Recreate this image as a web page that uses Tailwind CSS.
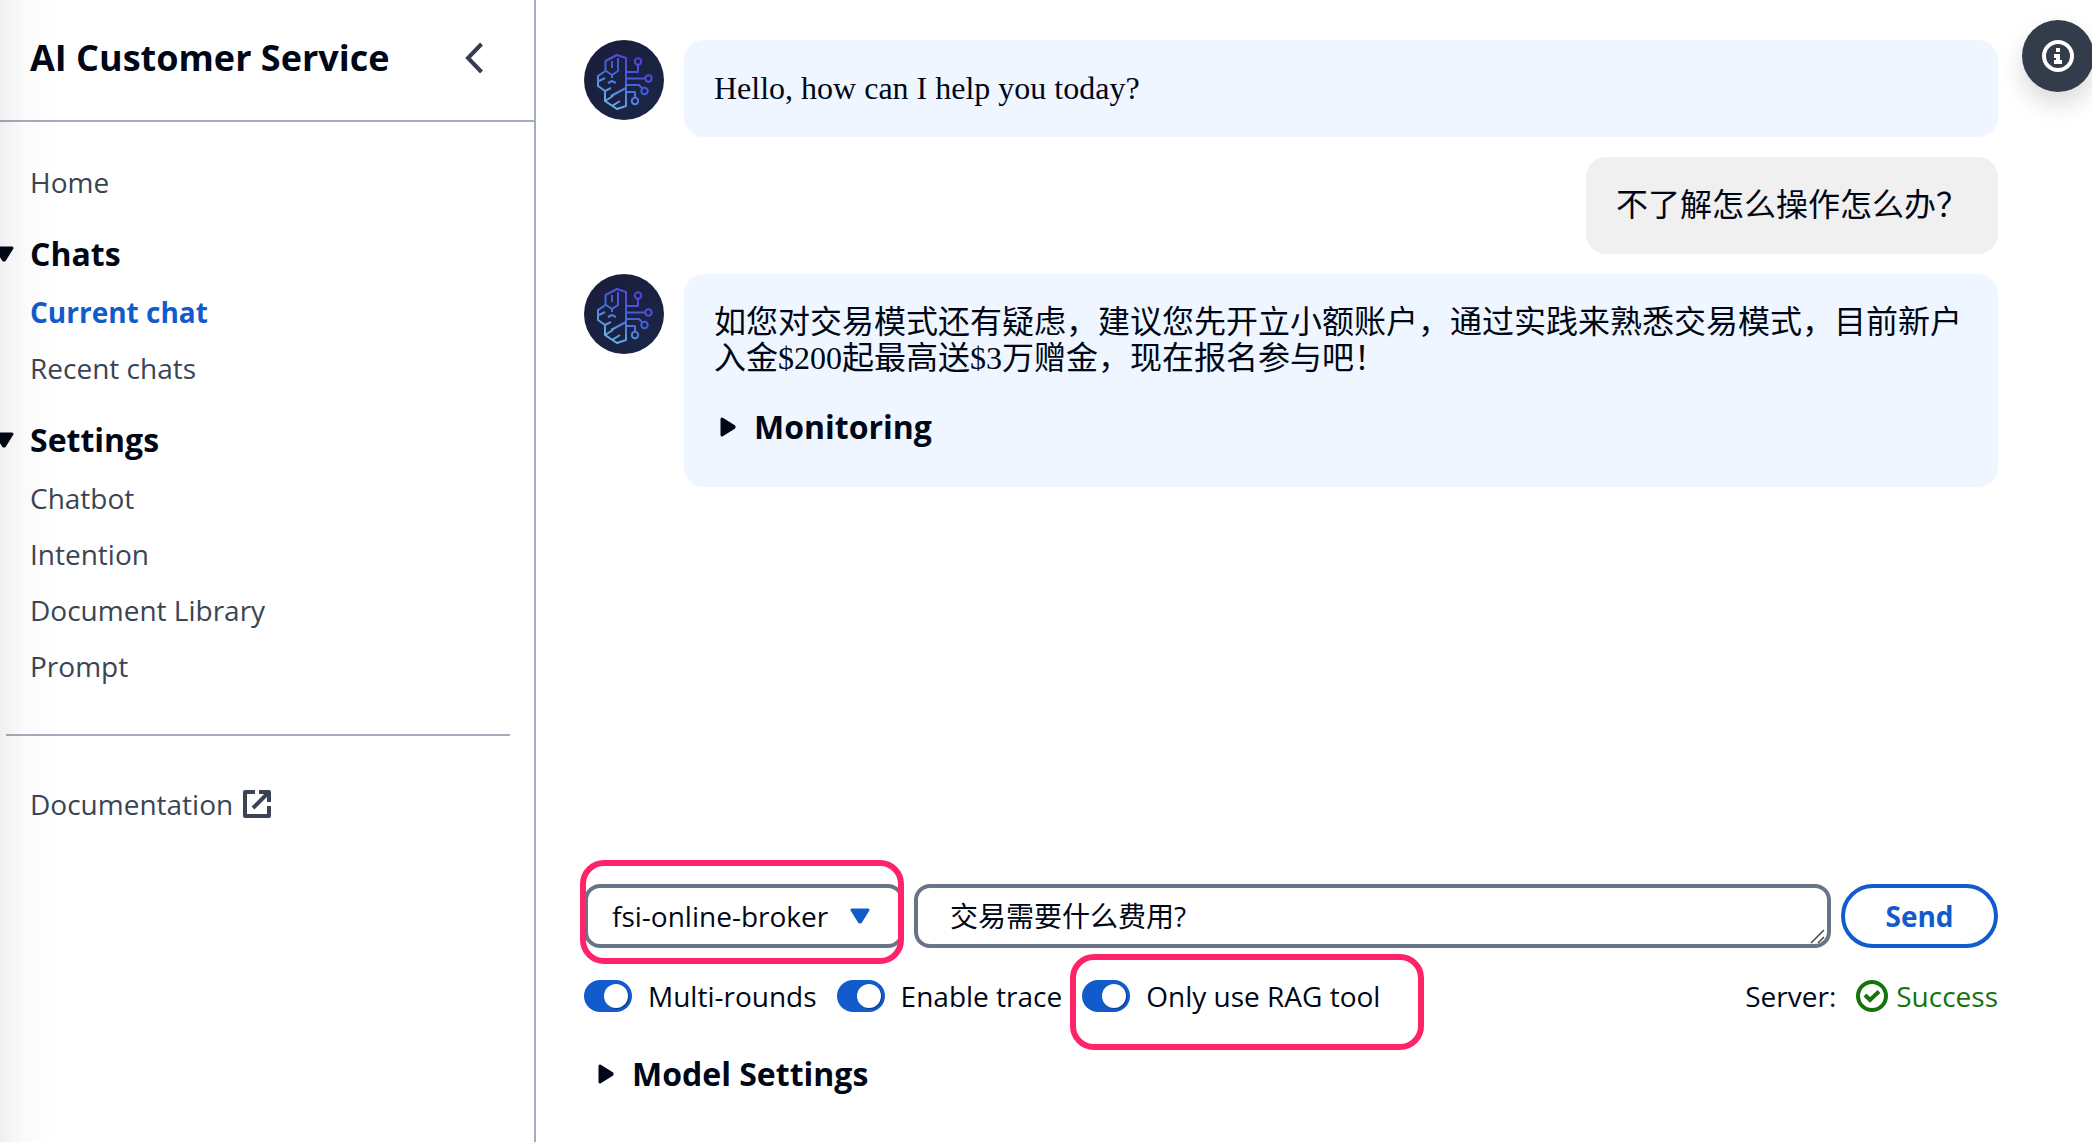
<!DOCTYPE html>
<html lang="en">
<head>
<meta charset="utf-8">
<meta name="viewport" content="width=device-width, initial-scale=1">
<title>AI Customer Service</title>
<script src="https://cdn.jsdelivr.net/npm/@tailwindcss/browser@4"></script>
</head>
<body class="bg-white text-[#000716] font-['Open_Sans','Noto_Sans_CJK_SC',sans-serif] text-[28px] leading-10">

<!-- Shared shapes -->
<svg class="absolute h-0 w-0" aria-hidden="true">
  <defs>
    <linearGradient id="disc" x1="0" y1="0" x2="1" y2="1">
      <stop offset="0" stop-color="#1b1c3a"/><stop offset="1" stop-color="#1a2747"/>
    </linearGradient>
    <linearGradient id="brain" gradientUnits="userSpaceOnUse" x1="56" y1="20" x2="24" y2="66">
      <stop offset="0" stop-color="#5a3fdc"/><stop offset=".45" stop-color="#3f63dc"/><stop offset="1" stop-color="#6bb5e6"/>
    </linearGradient>
  </defs>
  <symbol id="avatar" viewBox="0 0 80 80">
    <circle cx="40" cy="40" r="40" fill="url(#disc)"/>
    <g fill="none" stroke="url(#brain)" stroke-width="2" stroke-linejoin="round">
      <path d="M42 18 33 15 21.500 21V31L14 36V46L21 51V61L33 69 42 66Z"/>
      <path d="M28 21V28M34 18V31L28 35 22 31M28 35V38M15 41 21 38M24 43 28 41 32 43M21 51 27 48M27 56 42 48M21 61 29 56M28 66 36 61"/>
      <path d="M42 32H54V25M42 38.500H61M42 45H55L58 48M42 52H51V57"/>
      <circle cx="54" cy="21.500" r="3.200"/><circle cx="64.500" cy="38.500" r="3.200"/>
      <circle cx="60.500" cy="51" r="3.200"/><circle cx="51" cy="61" r="3.200"/>
    </g>
  </symbol>
  <symbol id="caret-down" viewBox="0 0 20 16">
    <path d="M2 2H18L10.500 14H9.500Z" fill="currentColor" stroke="currentColor" stroke-width="3" stroke-linejoin="round"/>
  </symbol>
  <symbol id="caret-right" viewBox="0 0 16 20">
    <path d="M2 2V18L14 10.500V9.500Z" fill="currentColor" stroke="currentColor" stroke-width="3" stroke-linejoin="round"/>
  </symbol>
</svg>

<div class="relative flex min-h-screen overflow-hidden">
  <div class="pointer-events-none absolute inset-y-0 left-0 w-14 bg-linear-to-r from-black/6 via-black/2 via-40% to-transparent"></div>

  <aside class="w-[536px] shrink-0 border-r-2 border-[#a3adbb]">
    <header class="flex h-[122px] items-start justify-between border-b-2 border-[#a3adbb] pt-9 pr-[50px] pl-[30px]">
      <h1 class="text-[36px] leading-[44px] font-bold">AI Customer Service</h1>
      <button type="button" aria-label="Close navigation" class="flex h-11 items-center text-[#333d4b]">
        <svg class="h-8 w-5" viewBox="0 0 20 32" fill="none" stroke="currentColor" stroke-width="4"><path d="M17.500 2 4 16 17.500 30"/></svg>
      </button>
    </header>

    <nav class="pt-10 text-[#3a4554]">
      <a href="#" class="block pl-[30px]">Home</a>
      <section class="mt-8 pl-[30px]">
        <button type="button" class="-ml-9 flex items-center gap-4 text-[32px] leading-10 font-bold text-[#000716]">
          <svg class="h-4 w-5"><use href="#caret-down"/></svg>Chats
        </button>
        <ul class="mt-[18px] flex flex-col gap-4">
          <li><a href="#" aria-current="page" class="block font-bold text-[#115bcc]">Current chat</a></li>
          <li><a href="#" class="block">Recent chats</a></li>
        </ul>
      </section>
      <section class="mt-8 pl-[30px]">
        <button type="button" class="-ml-9 flex items-center gap-4 text-[32px] leading-10 font-bold text-[#000716]">
          <svg class="h-4 w-5"><use href="#caret-down"/></svg>Settings
        </button>
        <ul class="mt-[18px] flex flex-col gap-4">
          <li><a href="#" class="block">Chatbot</a></li>
          <li><a href="#" class="block">Intention</a></li>
          <li><a href="#" class="block">Document Library</a></li>
          <li><a href="#" class="block">Prompt</a></li>
        </ul>
      </section>
      <hr class="mt-12 mr-6 ml-1.5 border-t-2 border-[#a3adbb]">
      <a href="#" class="mt-12 flex items-center gap-2.5 pl-[30px]">Documentation
        <svg class="h-7 w-7" viewBox="0 0 28 28" fill="none" stroke="currentColor" stroke-width="4"><path d="M12 2H2V26H26V16M16 2H26V12M26 2 10 18" stroke-linejoin="round"/></svg>
      </a>
    </nav>
  </aside>

  <main class="flex min-w-0 flex-1 flex-col pt-10 pr-[94px] pb-12 pl-12">
    <div class="flex flex-1 flex-col gap-5 font-['Liberation_Serif','Noto_Sans_CJK_SC',serif] text-[32px] leading-9">
      <div class="flex items-start gap-5">
        <svg class="h-20 w-20 shrink-0"><use href="#avatar"/></svg>
        <p class="min-w-0 flex-1 rounded-[20px] bg-[#eff6ff] px-[30px] pt-[30px] pb-[31px]">Hello, how can I help you today?</p>
      </div>
      <p class="self-end rounded-[20px] bg-[#f0f0f0] px-[30px] pt-[30px] pb-[31px]">不了解怎么操作怎么办？</p>
      <div class="flex items-start gap-5">
        <svg class="h-20 w-20 shrink-0"><use href="#avatar"/></svg>
        <div class="min-w-0 flex-1 rounded-[20px] bg-[#eff6ff] px-[30px] pt-[30px] pb-10">
          <p>如您对交易模式还有疑虑，建议您先开立小额账户，通过实践来熟悉交易模式，目前新户入金$200起最高送$3万赠金，现在报名参与吧！</p>
          <button type="button" class="mt-[31px] flex items-center gap-[18px] pl-1.5 font-['Open_Sans',sans-serif] leading-10 font-bold">
            <svg class="h-5 w-4"><use href="#caret-right"/></svg>Monitoring
          </button>
        </div>
      </div>
    </div>

    <form class="mt-5">
      <div class="flex gap-2.5">
        <div class="relative w-80 shrink-0">
          <select aria-label="Chatbot" class="h-16 w-full appearance-none rounded-2xl border-4 border-[#687586] bg-white pr-14 pl-6">
            <option>fsi-online-broker</option>
          </select>
          <svg class="pointer-events-none absolute top-6 right-[34px] h-4 w-5 text-[#115bcc]"><use href="#caret-down"/></svg>
          <div class="pointer-events-none absolute -top-6 right-0 -bottom-4 -left-1 rounded-3xl border-6 border-[#ff2468]"></div>
        </div>
        <div class="relative min-w-0 flex-1">
          <textarea aria-label="Message" rows="1" class="block h-16 w-full resize-none overflow-hidden rounded-2xl border-4 border-[#687586] px-8 py-2">交易需要什么费用?</textarea>
          <svg class="pointer-events-none absolute right-1.5 bottom-1 h-4 w-4" viewBox="0 0 16 16" stroke="#444" stroke-width="1.500"><path d="M2 15 15 2M9 15 15 9"/></svg>
        </div>
        <button type="button" class="h-16 w-[157px] shrink-0 rounded-full border-4 border-[#115bcc] font-bold text-[#115bcc]">Send</button>
      </div>

      <div class="mt-7 flex items-center justify-between">
        <div class="flex gap-5">
          <label class="flex items-center gap-4">
            <input type="checkbox" checked class="relative h-8 w-12 appearance-none rounded-full bg-[#115bcc] before:absolute before:top-1 before:right-1 before:h-6 before:w-6 before:rounded-full before:bg-white before:shadow-[1px_1px_1px_rgba(0,7,22,0.4)]">Multi-rounds
          </label>
          <label class="flex items-center gap-4">
            <input type="checkbox" checked class="relative h-8 w-12 appearance-none rounded-full bg-[#115bcc] before:absolute before:top-1 before:right-1 before:h-6 before:w-6 before:rounded-full before:bg-white before:shadow-[1px_1px_1px_rgba(0,7,22,0.4)]">Enable trace
          </label>
          <label class="relative flex items-center gap-4">
            <input type="checkbox" checked class="relative h-8 w-12 appearance-none rounded-full bg-[#115bcc] before:absolute before:top-1 before:right-1 before:h-6 before:w-6 before:rounded-full before:bg-white before:shadow-[1px_1px_1px_rgba(0,7,22,0.4)]">Only use RAG tool
            <span class="pointer-events-none absolute -top-[22px] -right-11 -bottom-[34px] -left-3 rounded-3xl border-6 border-[#ff2468]"></span>
          </label>
        </div>
        <div class="flex items-center gap-5">
          <span>Server:</span>
          <span class="flex items-center gap-2 text-[#14740b]">
            <svg class="h-8 w-8" viewBox="0 0 32 32" fill="none" stroke="currentColor" stroke-width="4"><circle cx="16" cy="16" r="14"/><path d="M9 15 14 20 23 11.500"/></svg>Success
          </span>
        </div>
      </div>

      <button type="button" class="mt-[38px] ml-3.5 flex items-center gap-[18px] text-[32px] leading-10 font-bold">
        <svg class="h-5 w-4"><use href="#caret-right"/></svg>Model Settings
      </button>
    </form>
  </main>

  <button type="button" aria-label="Open info panel" class="absolute top-5 -right-0.5 flex h-[72px] w-[72px] items-center justify-center rounded-full bg-[#333c4b] text-white shadow-[0_12px_24px_rgba(0,7,22,0.15)]">
    <svg class="h-8 w-8" viewBox="0 0 32 32"><circle cx="16" cy="16" r="14" fill="none" stroke="currentColor" stroke-width="4"/><path d="M14 8H18V12H14ZM12 14H18V20H20V24H12V20H14V18H12Z" fill="currentColor"/></svg>
  </button>
</div>
</body>
</html>
